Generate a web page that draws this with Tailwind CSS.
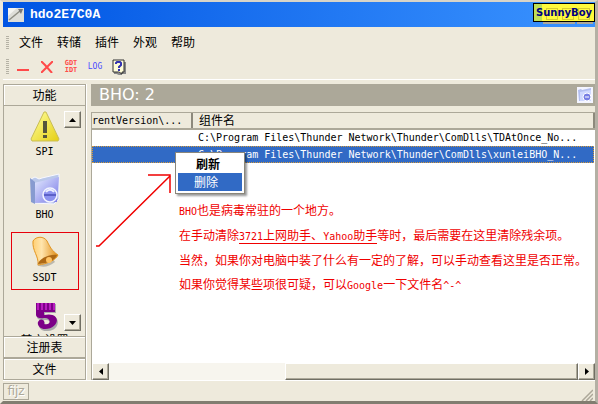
<!DOCTYPE html>
<html lang="zh-CN">
<head>
  <meta charset="UTF-8" />
  <meta name="viewport" content="width=device-width, initial-scale=1" />
  <title>hdo2E7C0A</title>
  <script src="https://cdn.jsdelivr.net/npm/@tailwindcss/browser@4"></script>
</head>
<body class="h-screen overflow-hidden bg-[#eeeadc] font-['DejaVu_Sans_Mono','Noto_Sans_CJK_SC',monospace] text-xs text-black">
  <div class="relative flex h-full flex-col border-r-3 border-b-3 border-l-3 border-t-2 border-t-[#d8d4c8] border-r-[#b4b0a4] border-b-[#817d70] border-l-[#eeeadc]">

    <!-- Title bar -->
    <header class="relative flex h-[25px] shrink-0 items-center gap-1.5 bg-linear-to-r from-[#0054e3] to-[#3a93ff] pr-1 pl-[5px]">
      <svg class="h-4 w-4" viewBox="0 0 16 16">
        <path d="M0 1h16v14H0z" fill="#f4f4f0" />
        <path d="M0 15V9l9-8h7v14z" fill="#deded8" />
        <path d="M1 13 12 4" stroke="#8e8e84" stroke-width="1.5" />
        <path d="m10 2 5 0-2 5z" fill="#777" />
      </svg>
      <h1 class="font-['Liberation_Mono',monospace] text-[13px] font-bold text-white">hdo2E7C0A</h1>
      <div class="absolute top-px right-0 flex h-[19px] w-[62px] items-center justify-center border border-black bg-[#fffa3c] font-['DejaVu_Sans','Liberation_Sans',sans-serif] text-[10px] font-bold text-[#000080]">
        <div class="absolute inset-y-0 left-0 w-2 bg-[#bfdf55]"></div>
        <div class="absolute top-1 left-3 h-3 w-3 border border-[#d5cb32]"></div>
        <div class="absolute top-1 left-7 h-3 w-3 border border-[#d5cb32]"></div>
        <div class="absolute top-1 right-1 h-3 w-3 border border-[#d5cb32]"></div>
        <div class="absolute top-full right-px mt-px flex h-0.5 gap-0.5">
          <div class="w-8 bg-[#aca899]"></div>
          <div class="w-4 bg-[#aca899]"></div>
        </div>
        <span class="relative">SunnyBoy</span>
      </div>
    </header>

    <!-- Menu and toolbar -->
    <div class="shrink-0 border-b border-white pt-1">
      <nav class="flex h-6 items-center gap-2.5 pl-[3px]">
        <div class="h-3.5 w-[3px] bg-[repeating-linear-gradient(#b5b2a5_0_1px,transparent_1px_2px)]"></div>
        <div class="flex gap-3.5">
          <button>文件</button>
          <button>转储</button>
          <button>插件</button>
          <button>外观</button>
          <button>帮助</button>
        </div>
      </nav>
      <div class="flex h-6 items-center pl-[3px]">
        <div class="h-4 w-[3px] bg-[repeating-linear-gradient(#b5b2a5_0_1px,transparent_1px_2px)]"></div>
        <button class="ml-1 flex h-5 w-5 items-center justify-center" aria-label="Remove">
          <svg class="h-4 w-3" viewBox="0 0 12 16"><path d="M0 11h12" stroke="#ff4a4a" stroke-width="2" /></svg>
        </button>
        <button class="ml-1 flex h-5 w-5 items-center justify-center" aria-label="Delete">
          <svg class="h-3 w-3" viewBox="0 0 12 12"><path d="m0 0 4 4 7 8M12 0 7 5 0 12" fill="none" stroke="#ff4a4a" stroke-width="2" /></svg>
        </button>
        <button class="ml-1 w-5 text-center text-[7px] leading-[7px] font-bold text-[#ff4a4a]">GDT<br />IDT</button>
        <button class="ml-1 w-5 text-center text-[8px] text-[#4a4aff]">LOG</button>
        <button class="ml-1 flex h-5 w-5 items-center justify-center" aria-label="Help">
          <svg class="h-4 w-4" viewBox="0 0 16 16">
            <path d="M3 14h3l4 2v-2h4V3" fill="none" stroke="#888" stroke-width="2" />
            <path d="M2 1h11v12h-2v2l-3-2H2z" fill="#fffdd8" stroke="#333" />
            <path d="M5 5V4l1-1h3l1 1v2L8 8v1M8 10v2" fill="none" stroke="#3434b0" stroke-width="2" />
          </svg>
        </button>
      </div>
    </div>

    <!-- Main area -->
    <main class="mt-1 flex min-h-0 flex-1">
      <aside class="flex w-[84px] shrink-0 flex-col border-r border-white">
        <button class="h-[22px] shrink-0 border border-[#aca899] pt-px inset-shadow-[1px_1px_#fff]">功能</button>
        <div class="relative min-h-0 flex-1 overflow-hidden border-x border-[#aca899]">
          <ul class="flex flex-col items-center gap-[5px] text-[10px]">
            <li class="flex h-[58px] w-[68px] flex-col items-center pt-1">
              <svg class="h-8 w-8 shrink-0" viewBox="0 0 32 32">
                <defs>
                  <linearGradient id="warn" x2="1" y2="1"><stop stop-color="#ffffa0" /><stop offset="1" stop-color="#e5cf12" /></linearGradient>
                </defs>
                <path d="M15 2h2l13 27-1 2H3l-1-2z" fill="url(#warn)" stroke="#c9bd55" />
                <path d="M14 11h4v12h-4zM14 25h4v3h-4z" fill="#55553c" />
              </svg>
              <span class="leading-5">SPI</span>
            </li>
            <li class="flex h-[58px] w-[68px] flex-col items-center pt-1">
              <svg class="h-8 w-8 shrink-0" viewBox="0 0 32 32">
                <defs>
                  <linearGradient id="folder" x2="1" y2="1"><stop stop-color="#e6edff" /><stop offset="1" stop-color="#7777e6" /></linearGradient>
                </defs>
                <path d="M2 6 6 4l4 2 3-1L30 1v25l-5 5-21-1z" fill="#bac8ea" stroke="#f8f8ff" />
                <path d="m5 10 25-6-2 25-23 1z" fill="url(#folder)" />
                <path d="M1 5 6 9v22l-4-2z" fill="#879bd0" />
                <circle cx="21" cy="22" r="7" fill="#8c92ef" stroke="#f3f5ff" stroke-width="1.5" />
                <path d="M15 22h12" stroke="#5b60c8" stroke-width="2" />
                <path d="M17 19c2-3 6-3 8 0" fill="none" stroke="#edf0ff" stroke-width="2" />
              </svg>
              <span class="leading-5">BHO</span>
            </li>
            <li class="flex h-[58px] w-[68px] flex-col items-center border border-red-600 pt-[3px]">
              <svg class="h-8 w-8 shrink-0" viewBox="0 0 32 32">
                <defs>
                  <linearGradient id="bell"><stop stop-color="#ffcf73" /><stop offset=".35" stop-color="#ffe5ad" /><stop offset="1" stop-color="#df8b13" /></linearGradient>
                </defs>
                <path d="M8 29c5 3 12 2 18-3l-2-3z" fill="#bbb8ad" />
                <path d="M4 5c3-5 11-5 14 0 3 6 5 10 11 14-2 5-11 9-20 10C10 20 3 15 4 5z" fill="url(#bell)" stroke="#e29622" />
                <path d="M9 28c1-5 11-10 19-9-1 5-11 9-19 9z" fill="#ad6915" />
                <circle cx="20" cy="24" r="3" fill="#ffc362" />
              </svg>
              <span class="leading-5">SSDT</span>
            </li>
            <li class="flex h-[58px] w-[68px] shrink-0 flex-col items-center pt-1">
              <svg class="h-8 w-8 shrink-0" viewBox="0 0 32 32">
                <path d="M7 4h19v9H15v3c18-4 16 16 1 15-5 0-8-4-7-7 2-5 8-2 6 2 8 2 7-7 0-6-5 1-8-1-8-3z" fill="#aaa" transform="translate(1 1)" />
                <path d="M7 4h19v9H15v3c18-4 16 14 1 14-5 0-8-4-7-7 2-5 8-2 6 2 8 2 7-7 0-6-5 1-8-1-8-3z" fill="#7d0088" />
                <path d="M9 4v7M13 4v7M17 4v7M21 4v7M25 4v7" stroke="#ca25d1" stroke-width="1.5" />
              </svg>
              <span class="text-xs leading-5 whitespace-nowrap">其它设置</span>
            </li>
          </ul>
          <button class="absolute top-[5px] right-1 flex h-[17px] w-[17px] items-center justify-center border border-t-white border-r-[#716f64] border-b-[#716f64] border-l-white bg-[#eeeadc] shadow-[inset_-1px_-1px_#aca899]" aria-label="Scroll up">
            <svg class="h-1 w-[7px]" viewBox="0 0 7 4"><path d="M0 4 3.500 0 7 4z" /></svg>
          </button>
          <button class="absolute right-1 bottom-[5px] flex h-[17px] w-[17px] items-center justify-center border border-t-white border-r-[#716f64] border-b-[#716f64] border-l-white bg-[#eeeadc] shadow-[inset_-1px_-1px_#aca899]" aria-label="Scroll down">
            <svg class="h-1 w-[7px]" viewBox="0 0 7 4"><path d="M0 0h7L3.500 4z" /></svg>
          </button>
        </div>
        <button class="h-[22px] shrink-0 border border-[#aca899] pt-px inset-shadow-[1px_1px_#fff]">注册表</button>
        <button class="h-[22px] shrink-0 border border-[#aca899] pt-px inset-shadow-[1px_1px_#fff]">文件</button>
      </aside>

      <section class="ml-1 flex min-w-0 flex-1 flex-col">
        <div class="flex h-[22px] shrink-0 items-center justify-between bg-[#aca899] pr-0.5 pl-2">
          <h2 class="font-['DejaVu_Sans',sans-serif] text-base text-white">BHO: 2</h2>
          <svg class="h-4 w-4" viewBox="0 0 16 16">
            <path d="M0 0h16v16H0z" fill="#f4f5ff" />
            <path d="m1 3 3-1 1 1 9-2v13H2z" fill="#b3bff0" />
            <path d="m3 5 11-2v11H3z" fill="#cfd8ff" />
            <circle cx="10" cy="10" r="4" fill="#777ee4" stroke="#fff" />
            <path d="M8 10h4" stroke="#fff" />
          </svg>
        </div>

        <div class="relative mt-1.5 flex min-h-0 flex-1 flex-col border-t border-l border-[#aca899] bg-white">
          <table class="w-full table-fixed border-collapse text-[10px] whitespace-pre">
            <thead>
              <tr class="h-4 bg-[#eeeadc] text-left">
                <th class="w-[100px] border-r-2 border-b-2 border-r-[#8d897c] border-b-[#aca899] p-0 leading-[14px] font-normal">rentVersion\...</th>
                <th class="border-r-2 border-b-2 border-r-[#8d897c] border-b-[#aca899] p-0 pl-1.5 text-xs leading-[14px] font-normal">组件名</th>
              </tr>
            </thead>
            <tbody>
              <tr class="h-[17px]">
                <td class="p-0"></td>
                <td class="p-0 pl-1.5 leading-4">C:\Program Files\Thunder Network\Thunder\ComDlls\TDAtOnce_No...</td>
              </tr>
              <tr class="h-[17px] bg-[#316ac5] text-white outline outline-offset-[-1px] outline-dotted outline-[#d59a3a]">
                <td class="p-0"></td>
                <td class="p-0 pl-1.5 leading-4">C:\Program Files\Thunder Network\Thunder\ComDlls\xunleiBHO_N...</td>
              </tr>
            </tbody>
          </table>

          <!-- Notes -->
          <div class="flex-1 pt-9 pl-[87px] leading-6 whitespace-nowrap text-[#f00000]">
            <p><span class="text-[10px]">BHO</span>也是病毒常驻的一个地方。</p>
            <p>在手动清除<span class="border-b border-[#f00000]"><span class="text-[10px]">3721</span>上网助手、<span class="text-[10px]">Yahoo</span>助手</span>等时，最后需要在这里清除残余项。</p>
            <p>当然，如果你对电脑中装了什么有一定的了解，可以手动查看这里是否正常。</p>
            <p>如果你觉得某些项很可疑，可以<span class="text-[10px]">Google</span>一下文件名<span class="text-[10px]">^-^</span></p>
          </div>

          <svg class="absolute top-[60px] left-1 h-[76px] w-20" viewBox="0 0 80 76" fill="none" stroke="#f00000">
            <path d="M0 73h3L74 3" stroke-width="1.500" />
            <path d="M52 2h22v18" stroke-width="1.500" />
          </svg>

          <!-- Context menu -->
          <div class="absolute top-[39px] left-[83px] flex h-[42px] w-[70px] flex-col border border-[#8a867a] bg-white p-0.5 shadow-[2px_2px_2px_#0006]">
            <button class="flex-1 pt-px pr-1 leading-4 font-bold">刷新</button>
            <button class="flex-1 bg-[#316ac5] pt-px pr-2 leading-4 text-white">删除</button>
          </div>

          <!-- Horizontal scrollbar -->
          <div class="flex h-[17px] shrink-0 bg-[#f7f5ee]">
            <button class="flex w-[17px] items-center justify-center border border-t-white border-r-[#716f64] border-b-[#716f64] border-l-white bg-[#eeeadc] shadow-[inset_-1px_-1px_#aca899]" aria-label="Scroll left">
              <svg class="h-[7px] w-1" viewBox="0 0 4 7"><path d="M4 0v7L0 3.500z" /></svg>
            </button>
            <div class="flex flex-1 justify-end">
              <div class="w-5/8 border border-t-white border-r-[#716f64] border-b-[#716f64] border-l-white bg-[#eeeadc] shadow-[inset_-1px_-1px_#aca899]"></div>
            </div>
            <button class="flex w-[17px] items-center justify-center border border-t-white border-r-[#716f64] border-b-[#716f64] border-l-white bg-[#eeeadc] shadow-[inset_-1px_-1px_#aca899]" aria-label="Scroll right">
              <svg class="h-[7px] w-1" viewBox="0 0 4 7"><path d="M0 0v7l4-3.500z" /></svg>
            </button>
          </div>
        </div>
      </section>
    </main>

    <!-- Status bar -->
    <footer class="flex h-[21px] shrink-0 items-center justify-between border-t border-white">
      <div class="flex h-[17px] w-[26px] items-center justify-center border border-[#aca899] font-['DejaVu_Sans',sans-serif] text-xs text-[#aca899] text-shadow-[1px_1px_#fff]">fijz</div>
      <svg class="mr-0.5 h-3 w-3 self-end" viewBox="0 0 12 12" stroke="#aca899" stroke-width="1.500"><path d="M1 12 12 1M5 12l7-7M9 12l3-3" /></svg>
    </footer>
  </div>
</body>
</html>
